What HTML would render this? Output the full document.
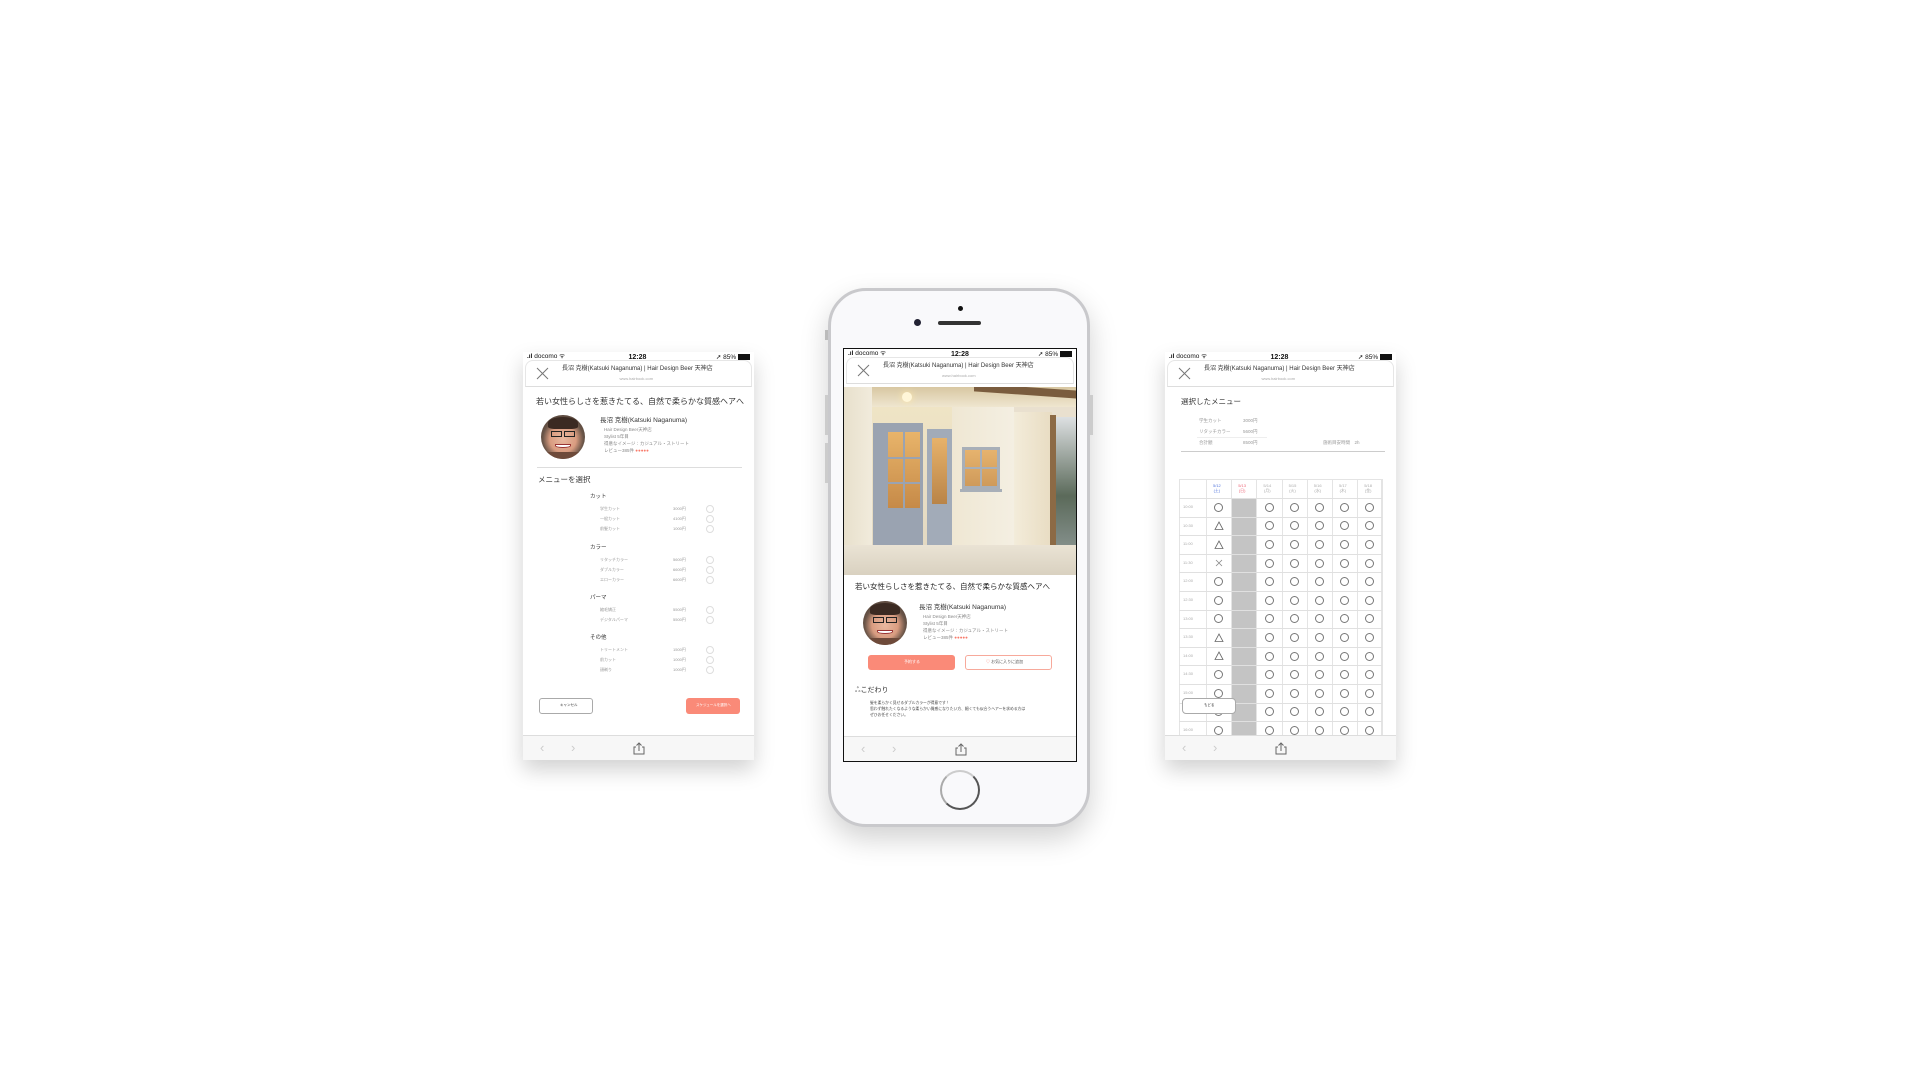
<!DOCTYPE html>
<html><head><meta charset="utf-8">
<style>
*{margin:0;padding:0;box-sizing:border-box}
body{width:1920px;height:1080px;background:#fff;position:relative;overflow:hidden;font-family:"Liberation Sans","Noto Sans CJK JP",sans-serif;color:#333}
.a{position:absolute}
.scr{position:absolute;background:#fff;overflow:hidden}
.t{position:absolute;white-space:nowrap;line-height:1}
.sb{position:absolute;left:0;right:0;top:0;height:9px;font-size:6.5px;color:#111}
.hd{position:absolute;left:2px;right:2px;top:8px;height:27px;border:1px solid #e6e6e6;border-bottom:1px solid #ddd;border-radius:8px 8px 0 0;background:#fff}
.bb{position:absolute;left:0;right:0;bottom:0;height:25px;background:#f7f7f7;border-top:1px solid #ddd}
.c{position:absolute;width:8px;height:8px;border:1px solid #ccc;border-radius:50%}
</style></head><body>

<div class="scr" id="L" style="left:523px;top:352px;width:231px;height:408px;box-shadow:0 10px 20px rgba(0,0,0,.18)"></div>
<div class="scr" id="R" style="left:1165px;top:352px;width:231px;height:408px;box-shadow:0 10px 20px rgba(0,0,0,.18)"></div>

<div class="a" style="left:828px;top:288px;width:262px;height:539px;border-radius:38px;background:#f9f9fb;border:3px solid #c9c9cc;box-shadow:0 12px 28px rgba(0,0,0,.18)"></div>
<div class="a" style="left:825px;top:330px;width:3px;height:10px;background:#bbb"></div>
<div class="a" style="left:825px;top:395px;width:3px;height:40px;background:#ccc"></div>
<div class="a" style="left:825px;top:443px;width:3px;height:40px;background:#ccc"></div>
<div class="a" style="left:1090px;top:395px;width:3px;height:40px;background:#ccc"></div>
<div class="a" style="left:958px;top:306px;width:5px;height:5px;border-radius:50%;background:#111"></div>
<div class="a" style="left:914px;top:319px;width:7px;height:7px;border-radius:50%;background:#223;"></div>
<div class="a" style="left:938px;top:321px;width:43px;height:4px;border-radius:2px;background:#333"></div>
<div class="a" style="left:940px;top:770px;width:40px;height:40px;border-radius:50%;border:2px solid #555;border-top-color:#ccc;border-left-color:#aaa"></div>

<div class="scr" id="C" style="left:843px;top:348px;width:234px;height:414px;border:1px solid #111"></div>

<script>
function common(el,w){
 let h='';
 h+=`<div class="sb"><span class="t" style="left:4px;top:2px;font-size:6.5px"><b>.ıl</b> docomo ᯤ</span><span class="t" style="left:${w/2-10}px;top:2px;font-weight:bold;font-size:7px">12:28</span><span class="t" style="right:4px;top:2px;font-size:6.5px">➚ 85% <span style="display:inline-block;width:12px;height:6px;background:#111;border:1px solid #111;vertical-align:-1px"></span></span></div>`;
 h+=`<div class="hd"><svg class="a" style="left:10px;top:6px" width="13" height="13"><path d="M1 1L12 12M12 1L1 12" stroke="#777" stroke-width="1"/></svg>
 <span class="t" style="left:36px;top:5px;font-size:6px;color:#333">長沼 克樹(Katsuki Naganuma) | Hair Design Beer 天神店</span>
 <span class="t" style="left:${w/2-22}px;top:16px;font-size:4px;color:#aaa">www.hairbook.com</span></div>`;
 h+=`<div class="bb"><span class="t" style="left:17px;top:5px;font-size:13px;color:#ccc">‹</span><span class="t" style="left:48px;top:5px;font-size:13px;color:#ccc">›</span>
 <svg class="a" style="left:${w/2-6}px;top:6px" width="12" height="13"><path d="M3 5H1V12H11V5H9M6 9V1M3.5 3.5L6 1L8.5 3.5" stroke="#666" fill="none" stroke-width="1"/></svg></div>`;
 el.innerHTML+=h;
}
function face(x,y,r){
 return `<div class="a" style="left:${x-r}px;top:${y-r}px;width:${2*r}px;height:${2*r}px;border-radius:50%;overflow:hidden;background:radial-gradient(circle at 50% 55%,#e9b8a0 0,#d99c80 40%,#6a5548 62%,#3a302a 100%)">
 <div class="a" style="left:${r*0.3}px;top:${r*0.1}px;width:${r*1.4}px;height:${r*0.55}px;border-radius:50% 50% 20% 20%;background:#3b2a22"></div>
 <div class="a" style="left:${r*0.45}px;top:${r*0.72}px;width:${r*0.5}px;height:${r*0.28}px;border:1.5px solid #222"></div>
 <div class="a" style="left:${r*1.05}px;top:${r*0.72}px;width:${r*0.5}px;height:${r*0.28}px;border:1.5px solid #222"></div>
 <div class="a" style="left:${r*0.65}px;top:${r*1.3}px;width:${r*0.7}px;height:${r*0.22}px;border-radius:0 0 50% 50%;background:#fff;border:1px solid #933"></div>
 <div class="a" style="left:0;top:${r*1.7}px;width:${2*r}px;height:${r*0.4}px;background:#6e4a3a"></div></div>`;
}
function stars(){return '<span style="color:#f87c6c;letter-spacing:0">●●●●●</span>'}

let L=document.getElementById('L'),h='';
h+=`<span class="t" style="left:13px;top:46px;font-size:8px;color:#333">若い女性らしさを惹きたてる、自然で柔らかな質感ヘアへ</span>`;
h+=face(40,85,22);
h+=`<span class="t" style="left:77px;top:66px;font-size:6.5px">長沼 克樹(Katsuki Naganuma)</span>
<span class="t" style="left:81px;top:76px;font-size:4.5px;color:#888">Hair Design Beer天神店</span>
<span class="t" style="left:81px;top:83px;font-size:4.5px;color:#888">Stylist 5年目</span>
<span class="t" style="left:81px;top:90px;font-size:4.5px;color:#888">得意なイメージ：カジュアル・ストリート</span>
<span class="t" style="left:81px;top:97px;font-size:4.5px;color:#888">レビュー385件 ${stars()}</span>
<div class="a" style="left:14px;top:115px;width:205px;height:1px;background:#ddd"></div>
<span class="t" style="left:15px;top:124px;font-size:7.5px">メニューを選択</span>`;
const sec=[["カット",146,[["学生カット","3000円"],["一般カット","4100円"],["前髪カット","1000円"]]],["カラー",197,[["リタッチカラー","5600円"],["ダブルカラー","6600円"],["エローカラー","6600円"]]],["パーマ",247,[["縮毛矯正","5500円"],["デジタルパーマ","5500円"]]],["その他",287,[["トリートメント","1500円"],["前カット","1000円"],["顔剃り","1000円"]]]];
sec.forEach(s=>{h+=`<span class="t" style="left:67px;top:${s[1]-3}px;font-size:5.5px">${s[0]}</span>`;
 s[2].forEach((r,i)=>{let y=s[1]+11+i*10;h+=`<span class="t" style="left:77px;top:${y-2}px;font-size:4px;color:#999">${r[0]}</span><span class="t" style="left:150px;top:${y-2}px;font-size:4px;color:#999">${r[1]}</span><div class="c" style="left:183px;top:${y-4}px;border-color:#ddd"></div>`})});
h+=`<div class="a" style="left:16px;top:346px;width:54px;height:16px;border:1px solid #aaa;border-radius:3px"></div><span class="t" style="left:37px;top:352px;font-size:3.5px">キャンセル</span>
<div class="a" style="left:163px;top:346px;width:54px;height:16px;background:#fa8a78;border-radius:3px"></div><span class="t" style="left:173px;top:352px;font-size:3.5px;color:#fff">スケジュールを選択へ</span>`;
L.innerHTML=h;common(L,231);

let R=document.getElementById('R');h='';
h+=`<span class="t" style="left:16px;top:46px;font-size:7.5px">選択したメニュー</span>`;
[["学生カット","3000円",69],["リタッチカラー","5600円",80],["合計額","8500円",91]].forEach(r=>{h+=`<span class="t" style="left:34px;top:${r[2]-2}px;font-size:4.5px;color:#999">${r[0]}</span><span class="t" style="left:78px;top:${r[2]-2}px;font-size:4.5px;color:#999">${r[1]}</span>`});
h+=`<span class="t" style="left:158px;top:89px;font-size:4.5px;color:#999">施術目安時間　2h</span>
<div class="a" style="left:32px;top:85px;width:70px;height:1px;background:#eee"></div>
<div class="a" style="left:16px;top:99px;width:204px;height:1px;background:#ccc"></div>`;
let tx=14,ty=127,cw=25.2,fw=27,rh=18.6;
h+=`<div class="a" style="left:${tx}px;top:${ty}px;width:${fw+7*cw}px;height:400px;border:1px solid #e4e4e4"></div>`;
h+=`<div class="a" style="left:${tx+fw+cw}px;top:${ty+19}px;width:${cw}px;height:400px;background:#c4c4c4"></div>`;
const days=["5/12\n(土)","5/13\n(日)","5/14\n(月)","5/15\n(火)","5/16\n(水)","5/17\n(木)","5/18\n(金)"];
days.forEach((d,i)=>{let col=i==0?'#5577dd':i==1?'#ee6677':'#aaa';h+=`<span class="t" style="left:${tx+fw+i*cw+7}px;top:${ty+4}px;font-size:4px;color:${col};white-space:pre;text-align:center;line-height:1.3">${d}</span>`});
for(let i=0;i<=7;i++)h+=`<div class="a" style="left:${tx+fw+i*cw}px;top:${ty}px;width:1px;height:400px;background:#e4e4e4"></div>`;
const times=["10:00","10:30","11:00","11:30","12:00","12:30","13:00","13:30","14:00","14:30","15:00","15:30","16:00"];
const c0=["o","t","t","x","o","o","o","t","t","o","o","o","o"];
times.forEach((tm,r)=>{let y=ty+19+r*rh;h+=`<div class="a" style="left:${tx}px;top:${y}px;width:${fw+7*cw}px;height:1px;background:#e0e0e0"></div><span class="t" style="left:${tx+4}px;top:${y+7}px;font-size:4px;color:#aaa">${tm}</span>`;
 for(let c=0;c<7;c++){if(c==1)continue;let cx=tx+fw+c*cw+cw/2,cy=y+rh/2;let s=c==0?c0[r]:'o';
  if(s=='o')h+=`<div class="c" style="left:${cx-4.5}px;top:${cy-4.5}px;width:9px;height:9px;border-color:#777"></div>`;
  else if(s=='t')h+=`<svg class="a" style="left:${cx-5}px;top:${cy-5}px" width="10" height="10"><path d="M5 1L9 8.5H1Z" fill="none" stroke="#666" stroke-width=".8"/></svg>`;
  else h+=`<svg class="a" style="left:${cx-4}px;top:${cy-4}px" width="8" height="8"><path d="M1 1L7 7M7 1L1 7" stroke="#888" stroke-width=".8"/></svg>`;}});
h+=`<div class="a" style="left:17px;top:346px;width:54px;height:16px;background:#fff;border:1px solid #aaa;border-radius:4px"></div><span class="t" style="left:39px;top:352px;font-size:3.5px">もどる</span>`;
R.innerHTML=h;common(R,231);

let C=document.getElementById('C');h='';
h+=`<div class="a" style="left:0;top:38px;width:234px;height:188px;overflow:hidden;background:#e9e0cf">
<div class="a" style="left:0;top:0;width:234px;height:20px;background:linear-gradient(#d8c7a2,#efe6d0)"></div>
<div class="a" style="left:0;top:0;width:28px;height:188px;background:linear-gradient(90deg,#e8e0cc,#f1ebdc)"></div>
<div class="a" style="left:28px;top:20px;width:80px;height:140px;background:linear-gradient(#efe4c5,#e3d9c3)"></div>
<div class="a" style="left:29px;top:36px;width:50px;height:134px;background:#9aa3b1"></div>
<div class="a" style="left:44px;top:45px;width:32px;height:76px;background:linear-gradient(#e8b46a,#c68a48)"></div>
<div class="a" style="left:59px;top:45px;width:2px;height:76px;background:#9aa3b1"></div>
<div class="a" style="left:44px;top:70px;width:32px;height:2px;background:#9aa3b1"></div>
<div class="a" style="left:44px;top:95px;width:32px;height:2px;background:#9aa3b1"></div>
<div class="a" style="left:83px;top:42px;width:25px;height:128px;background:#a2abb8"></div>
<div class="a" style="left:88px;top:51px;width:15px;height:66px;background:linear-gradient(#e7b26a,#b98448)"></div>
<div class="a" style="left:108px;top:20px;width:62px;height:140px;background:linear-gradient(90deg,#efe7d3,#f4efe2)"></div>
<div class="a" style="left:118px;top:60px;width:38px;height:42px;background:#a8afb8"></div>
<div class="a" style="left:121px;top:63px;width:32px;height:36px;background:linear-gradient(#e6b36e,#cf9a5a)"></div>
<div class="a" style="left:136px;top:63px;width:2px;height:36px;background:#a8afb8"></div>
<div class="a" style="left:121px;top:80px;width:32px;height:2px;background:#a8afb8"></div>
<div class="a" style="left:116px;top:102px;width:42px;height:3px;background:#a8afb8"></div>
<div class="a" style="left:170px;top:25px;width:38px;height:135px;background:linear-gradient(90deg,#f3ecda,#e8dcc2)"></div>
<div class="a" style="left:206px;top:28px;width:6px;height:130px;background:#8c6a45"></div>
<div class="a" style="left:130px;top:0;width:104px;height:8px;background:#7a5c3e;transform:skewY(4deg)"></div>
<div class="a" style="left:212px;top:30px;width:22px;height:158px;background:linear-gradient(#dde0e2,#5b6a5a 50%,#9aa3a5)"></div>
<div class="a" style="left:0;top:158px;width:234px;height:30px;background:linear-gradient(#eae3d4,#d9d1c0)"></div>
<div class="a" style="left:58px;top:5px;width:10px;height:10px;border-radius:50%;background:#fff6d8;box-shadow:0 0 8px #ffe8a8"></div>
</div>`;
h+=`<span class="t" style="left:11px;top:234px;font-size:7.5px;color:#222">若い女性らしさを惹きたてる、自然で柔らかな質感ヘアへ</span>`;
h+=face(41,274,22);
h+=`<span class="t" style="left:75px;top:256px;font-size:6.5px">長沼 克樹(Katsuki Naganuma)</span>
<span class="t" style="left:79px;top:266px;font-size:4.5px;color:#888">Hair Design Beer天神店</span>
<span class="t" style="left:79px;top:273px;font-size:4.5px;color:#888">Stylist 5年目</span>
<span class="t" style="left:79px;top:280px;font-size:4.5px;color:#888">得意なイメージ：カジュアル・ストリート</span>
<span class="t" style="left:79px;top:287px;font-size:4.5px;color:#888">レビュー385件 ${stars()}</span>
<div class="a" style="left:24px;top:306px;width:87px;height:15px;background:#fa8a78;border-radius:3px"></div><span class="t" style="left:60px;top:311px;font-size:4px;color:#fff">予約する</span>
<div class="a" style="left:121px;top:306px;width:87px;height:15px;border:1px solid #f7a99b;border-radius:3px"></div><span class="t" style="left:142px;top:311px;font-size:4px;color:#555"><span style="color:#f87c6c">♡</span> お気に入りに追加</span>
<span class="t" style="left:11px;top:338px;font-size:7px;color:#333">ஃこだわり</span>
<span class="t" style="left:26px;top:353px;font-size:3.8px;color:#444">髪を柔らかく見せるダブルカラーが得意です！</span>
<span class="t" style="left:26px;top:359px;font-size:3.8px;color:#444">思わず触れたくなるような柔らかい質感になりたい方、細くても似合うヘアーを求める方は</span>
<span class="t" style="left:26px;top:365px;font-size:3.8px;color:#444">ぜひお任せください。</span>`;
C.innerHTML=h;common(C,234);
</script>
</body></html>
